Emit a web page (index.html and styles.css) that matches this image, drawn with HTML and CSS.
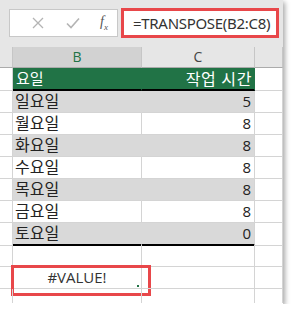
FILE: index.html
```html
<!DOCTYPE html>
<html lang="ko">
<head>
  <meta charset="UTF-8">
  <title>TRANSPOSE #VALUE!</title>
  <link rel="stylesheet" href="styles.css">
</head>
<body>
  <div class="sheet-window">
    <div class="formula-bar">
      <div class="formula-buttons">
        <svg class="icon-btn" width="12" height="12" viewBox="0 0 12 12" fill="none" stroke="#b4b4b4" stroke-width="1.3">
          <path d="M1 1l10 10M11 1L1 11"></path>
        </svg>
        <svg class="icon-btn" width="14" height="12" viewBox="0 0 14 12" fill="none" stroke="#b4b4b4" stroke-width="1.6">
          <path d="M1 6.5l4 4L13 1.5"></path>
        </svg>
        <span class="fx">f<sub>x</sub></span>
      </div>
      <div class="formula-input">=TRANSPOSE(B2:C8)</div>
    </div>

    <div class="grid">
      <div class="row col-heads">
        <div class="cell rh"></div>
        <div class="cell ch ch-active">B</div>
        <div class="cell ch">C</div>
        <div class="cell ch"></div>
      </div>
      <div class="row table-head">
        <div class="cell rh"></div>
        <div class="cell th">요일</div>
        <div class="cell th num">작업 시간</div>
        <div class="cell"></div>
      </div>
      <div class="row band"><div class="cell rh"></div><div class="cell td">일요일</div><div class="cell td num">5</div><div class="cell"></div></div>
      <div class="row"><div class="cell rh"></div><div class="cell td">월요일</div><div class="cell td num">8</div><div class="cell"></div></div>
      <div class="row band"><div class="cell rh"></div><div class="cell td">화요일</div><div class="cell td num">8</div><div class="cell"></div></div>
      <div class="row"><div class="cell rh"></div><div class="cell td">수요일</div><div class="cell td num">8</div><div class="cell"></div></div>
      <div class="row band"><div class="cell rh"></div><div class="cell td">목요일</div><div class="cell td num">8</div><div class="cell"></div></div>
      <div class="row"><div class="cell rh"></div><div class="cell td">금요일</div><div class="cell td num">8</div><div class="cell"></div></div>
      <div class="row band last"><div class="cell rh"></div><div class="cell td">토요일</div><div class="cell td num">0</div><div class="cell"></div></div>
      <div class="row"><div class="cell rh"></div><div class="cell"></div><div class="cell"></div><div class="cell"></div></div>
      <div class="row"><div class="cell rh"></div><div class="cell result">#VALUE!<span class="handle"></span></div><div class="cell"></div><div class="cell"></div></div>
      <div class="row short"><div class="cell rh"></div><div class="cell"></div><div class="cell"></div><div class="cell"></div></div>
    </div>
  </div>
</body>
</html>
```

FILE: styles.css
```css
:root {
  --excel-green: #217346;
  --grid-line: #d4d4d4;
  --band: #d9d9d9;
  --chrome: #e6e6e6;
  --alert: #e8474a;
}

* {
  margin: 0;
  padding: 0;
  box-sizing: border-box;
}

body {
  background: #ffffff;
  font-family: 'Noto Sans', 'Noto Sans CJK KR', sans-serif;
  color: #222;
}

.sheet-window {
  width: 283px;
  height: 304px;
  background: #ffffff;
  box-shadow: 2px 2px 5px rgba(0, 0, 0, 0.35);
  overflow: hidden;
}

/* Formula bar */
.formula-bar {
  height: 47px;
  background: var(--chrome);
  display: flex;
  align-items: flex-start;
  gap: 3px;
  padding: 8px 4px 0 9px;
}

.formula-buttons {
  width: 109px;
  height: 28px;
  margin-top: 1px;
  background: #ffffff;
  border: 1px solid #c8c8c8;
  display: flex;
  align-items: center;
  padding-left: 22px;
  gap: 22px;
}

.fx {
  font-family: 'Liberation Serif', serif;
  font-style: italic;
  font-size: 14px;
  color: #555;
  margin-left: -2px;
}

.fx sub {
  font-size: 9px;
}

.formula-input {
  flex: 1;
  height: 30px;
  background: #ffffff;
  border: 3px solid var(--alert);
  padding-left: 9px;
  font-size: 15px;
  line-height: 24px;
  color: #333;
  letter-spacing: -0.3px;
}

/* Grid */
.row {
  display: grid;
  grid-template-columns: 13px 129px 113px 28px;
  height: 22px;
}

.cell {
  border-right: 1px solid var(--grid-line);
  border-bottom: 1px solid var(--grid-line);
  font-size: 16px;
  line-height: 21px;
  white-space: nowrap;
  position: relative;
}

.col-heads {
  height: 21px;
  background: var(--chrome);
}

.col-heads .cell {
  border-bottom: 1px solid #ababab;
  border-right: 1px solid #c6c6c6;
}

.ch {
  text-align: center;
  font-family: 'Open Sans', sans-serif;
  font-size: 14px;
  line-height: 20px;
  color: #444;
}

.ch-active {
  background: #d2d2d2;
  color: var(--excel-green);
}

.table-head {
  height: 23px;
}

.table-head .th {
  background: var(--excel-green);
  color: #ffffff;
  border-right-color: var(--excel-green);
  border-bottom: 2px solid #000;
  padding: 0 3px 0 3px;
  font-size: 15px;
  line-height: 21px;
}

.td {
  padding: 0 3px 0 2px;
}

.num {
  text-align: right;
  font-family: 'Open Sans', sans-serif;
  font-size: 15px;
}

.th.num {
  font-family: 'Noto Sans CJK KR', sans-serif;
  font-size: 16px;
  letter-spacing: 0.6px;
  padding-right: 2px;
}

.band .td {
  background: var(--band);
}

.band .td:nth-child(2) {
  border-right-color: var(--band);
}

.last .td {
  border-bottom: 2px solid #000;
}

.result {
  text-align: center;
  font-family: 'Open Sans', sans-serif;
  font-size: 15px;
  color: #333;
}

.result::after {
  content: '';
  position: absolute;
  left: -2px;
  top: -2px;
  width: 134px;
  height: 25px;
  border: 3px solid var(--alert);
}

.handle {
  position: absolute;
  right: 2px;
  bottom: 1px;
  width: 2px;
  height: 2px;
  background: var(--excel-green);
}

.short {
  height: 14px;
}

.short .cell {
  border-bottom: none;
}
```
